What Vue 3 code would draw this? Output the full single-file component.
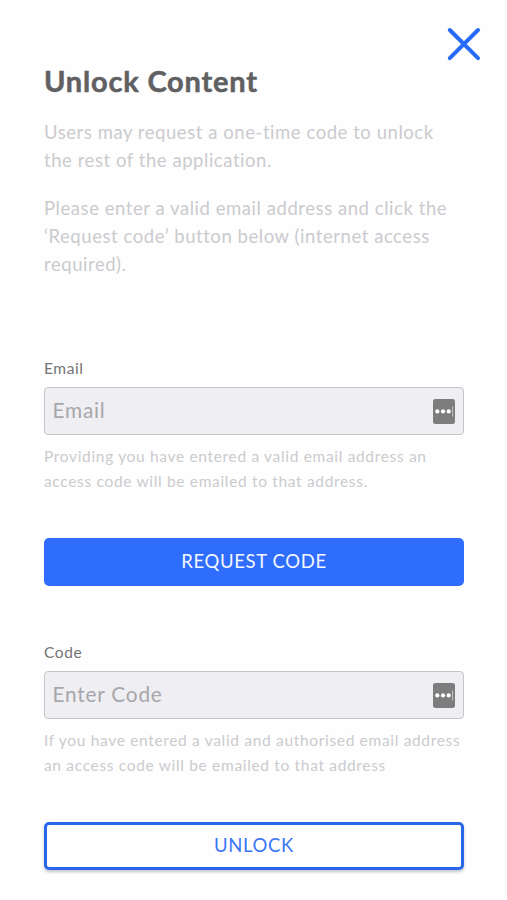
<script setup>
const intro = [
  ['Users may request a one-time code to unlock', 'the rest of the application.'],
  ['Please enter a valid email address and click the', '‘Request code’ button below (internet access', 'required).'],
]
const sections = [
  {
    id: 'email', label: 'Email', placeholder: 'Email', action: 'REQUEST CODE', kind: 'solid',
    help: ['Providing you have entered a valid email address an', 'access code will be emailed to that address.'],
  },
  {
    id: 'code', label: 'Code', placeholder: 'Enter Code', action: 'UNLOCK', kind: 'outline',
    help: ['If you have entered a valid and authorised email address', 'an access code will be emailed to that address'],
  },
]
</script>

<template>
  <main class="page">
    <header class="top">
      <button class="close" aria-label="Close">
        <svg width="36" height="36" viewBox="0 0 36 36">
          <path d="M3.8 4 32 32.2M32 4 3.8 32.2" fill="none" stroke="#256bf5" stroke-width="4" stroke-linecap="round" />
        </svg>
      </button>
    </header>
    <h1 class="title">Unlock Content</h1>
    <div class="intro">
      <p v-for="(lines, i) in intro" :key="i" class="para">
        <span v-for="line in lines" :key="line" class="line">{{ line }}</span>
      </p>
    </div>
    <form class="form" @submit.prevent>
      <section v-for="s in sections" :key="s.id" class="section">
        <label class="label" :for="s.id">{{ s.label }}</label>
        <div class="field">
          <input :id="s.id" class="input" :placeholder="s.placeholder" />
          <svg class="filler" width="22" height="25" viewBox="0 0 22 25">
            <rect width="22" height="25" rx="2.5" fill="#7d7d7d" />
            <g fill="#fff">
              <circle cx="4.3" cy="12.4" r="2.1" />
              <circle cx="10" cy="12.4" r="2.1" />
              <circle cx="15.7" cy="12.4" r="2.1" />
            </g>
            <path d="M19.6 7.5v10" stroke="#c4c4c4" stroke-width="1" />
          </svg>
        </div>
        <p class="help">
          <span v-for="line in s.help" :key="line" class="line">{{ line }}</span>
        </p>
        <button class="button" :class="s.kind">{{ s.action }}</button>
      </section>
    </form>
  </main>
</template>

<style>
body {
  margin: 0;
  background: #fefefe;
}
</style>

<style scoped>
.page {
  box-sizing: border-box;
  height: 900px;
  padding: 26px 43px 0 44px;
  font-family: Lato, "Liberation Sans", sans-serif;
}
.top {
  display: flex;
  justify-content: flex-end;
  height: 36px;
  margin-right: -18px;
}
.close {
  width: 36px;
  height: 36px;
  padding: 0;
  border: 0;
  background: none;
}
.close svg {
  display: block;
}
.title {
  margin: 0;
  font-size: 29px;
  line-height: 38px;
  font-weight: 700;
  letter-spacing: 0.8px;
  color: #606062;
  -webkit-text-stroke: 0.5px #606062;
}
.intro {
  display: flex;
  flex-direction: column;
  gap: 19px;
  height: 241px;
  padding-top: 18px;
  box-sizing: border-box;
}
.para,
.help {
  margin: 0;
}
.line {
  display: block;
  white-space: nowrap;
}
.para {
  font-size: 18.5px;
  line-height: 28.3px;
  letter-spacing: 0.55px;
  color: #cbcbce;
}
.form {
  display: flex;
  flex-direction: column;
}
.section {
  display: flex;
  flex-direction: column;
  height: 284.4px;
}
.label {
  margin-top: 17px;
  font-size: 15.5px;
  line-height: 20px;
  letter-spacing: 0.6px;
  color: #737375;
}
.field {
  box-sizing: border-box;
  display: flex;
  align-items: center;
  height: 48px;
  margin-top: 9px;
  padding: 0 8.5px 0 7.5px;
  border: 1.5px solid #c6c6c9;
  border-radius: 4px;
  background: #efeef3;
}
.input {
  flex: 1;
  min-width: 0;
  padding: 0 0 2px;
  border: 0;
  outline: 0;
  background: none;
  font: 20.8px/28px Lato, sans-serif;
  letter-spacing: 0.8px;
}
.input::placeholder {
  color: #a7a7ab;
  opacity: 1;
}
.help {
  margin-top: 9px;
  font-size: 15.5px;
  line-height: 24.5px;
  letter-spacing: 0.67px;
  color: #cbcbce;
}
.button {
  box-sizing: border-box;
  height: 48px;
  margin-top: 45px;
  padding: 0 0 3px;
  border: 0;
  border-radius: 5px;
  font: 18.5px/24px Lato, sans-serif;
  letter-spacing: 0.65px;
}
.solid {
  background: #2f6dfe;
  color: #f3f7ff;
}
.outline {
  border: 3px solid #2a67e8;
  background: #fefefe;
  color: #3b76f5;
  box-shadow: 0 2px 3px rgba(60, 70, 100, 0.3);
}
</style>
